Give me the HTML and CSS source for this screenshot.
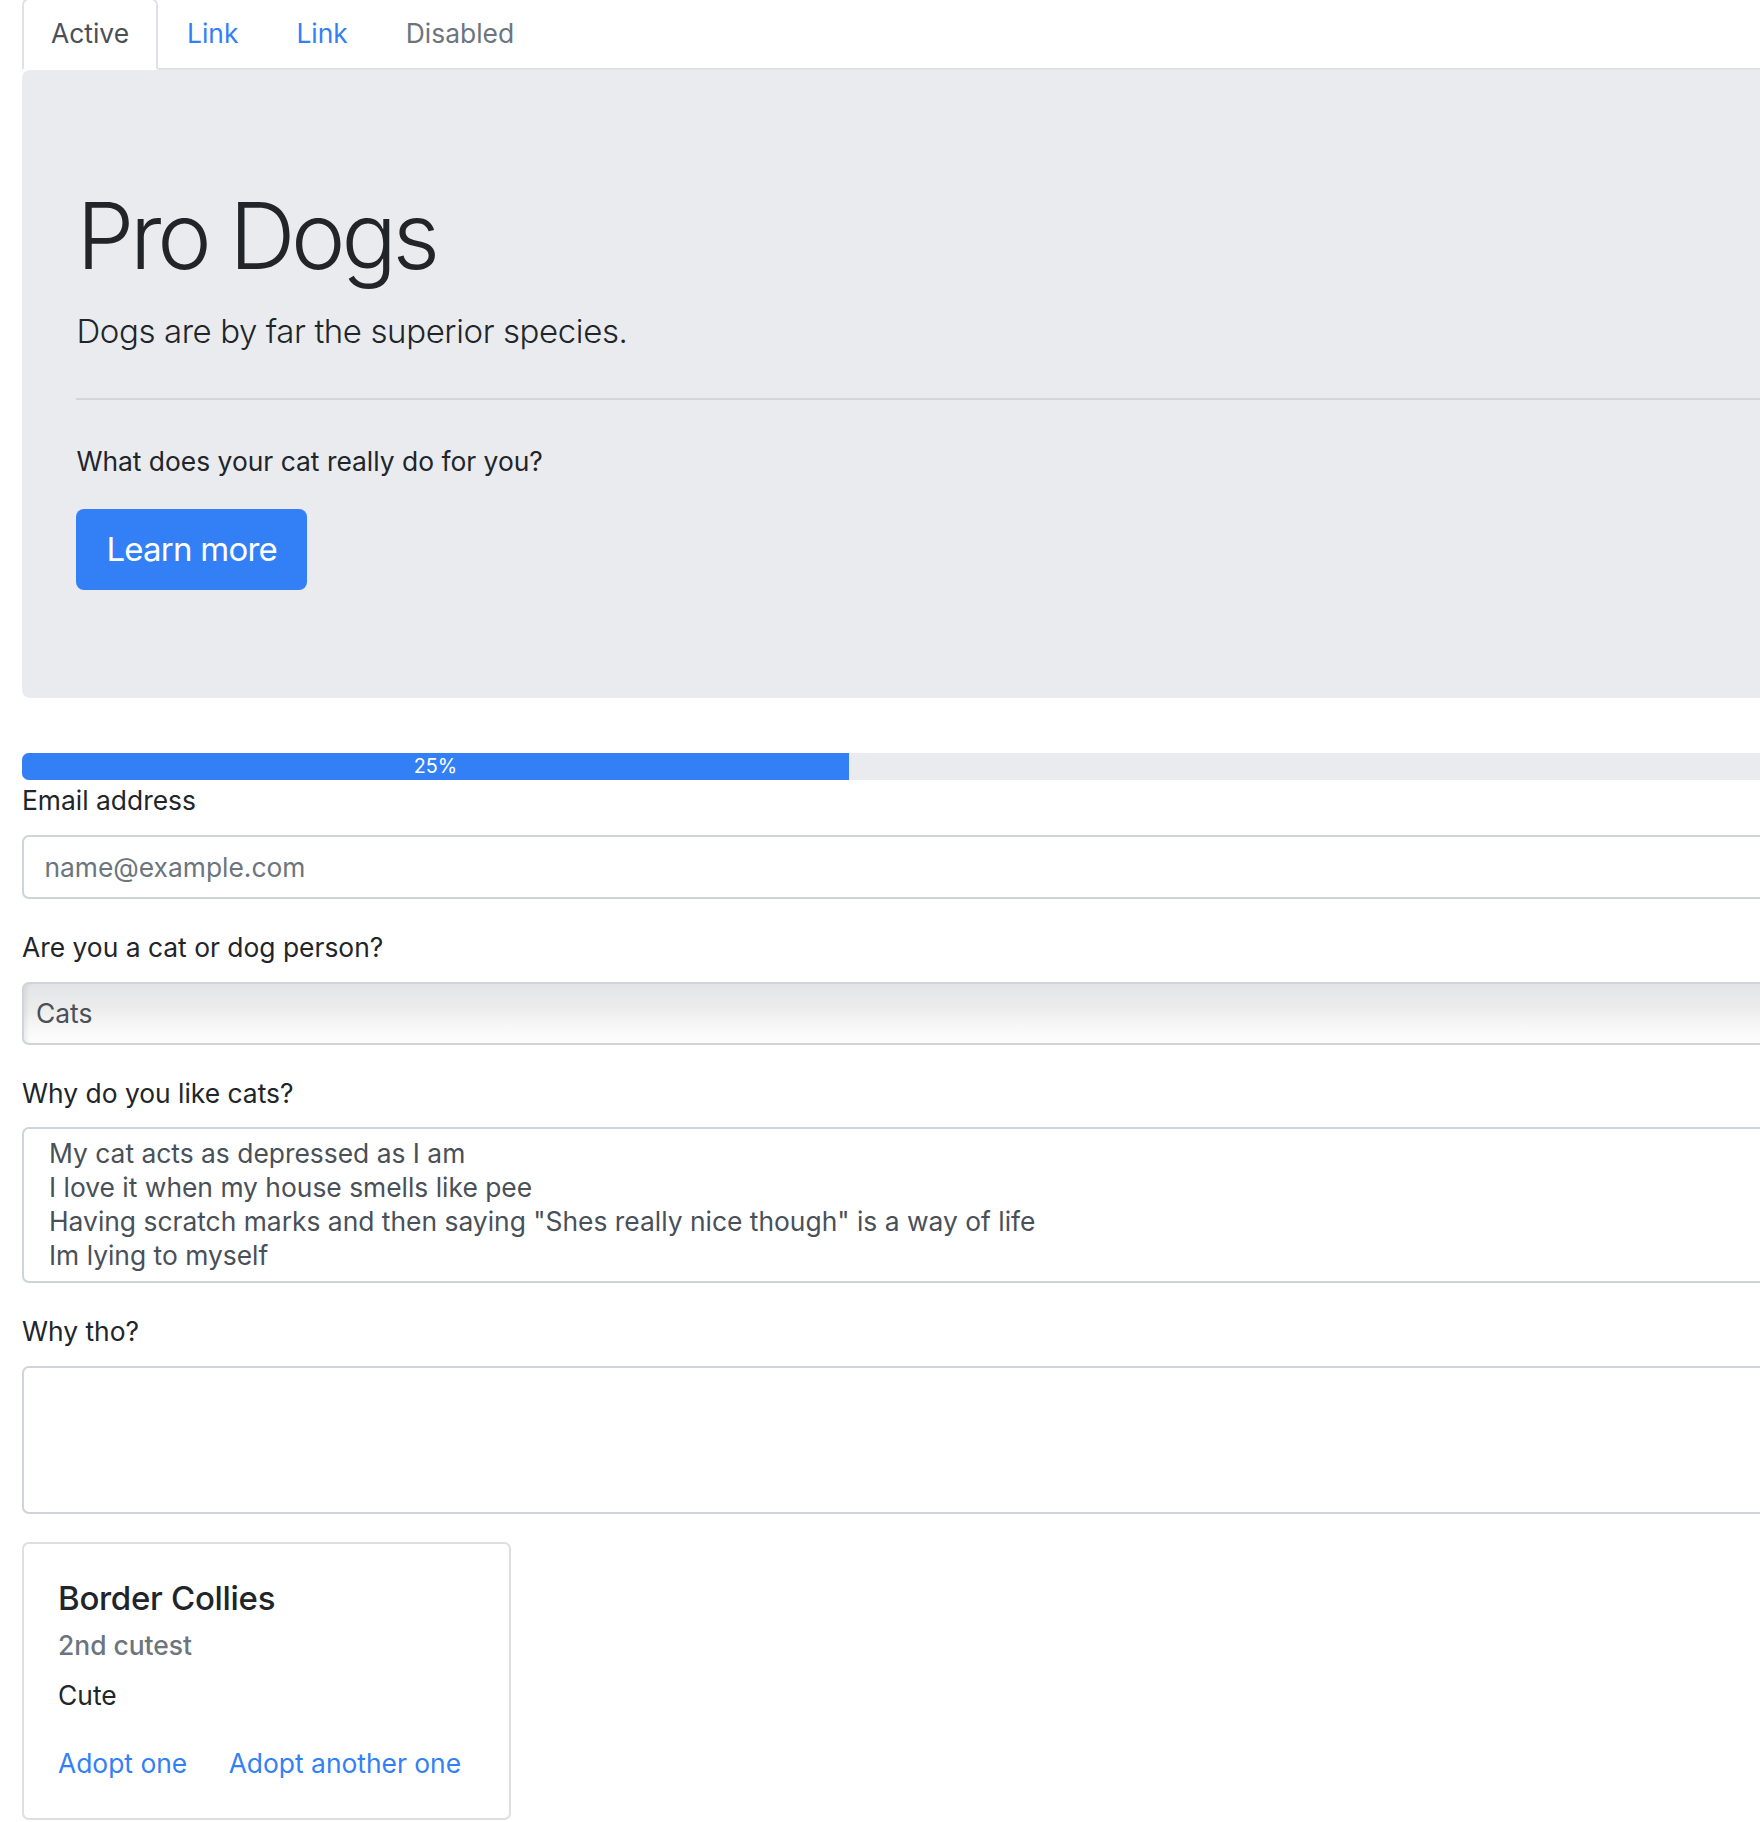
FILE: index.html
```html
<!DOCTYPE html>
<html lang="en">
<head>
<meta charset="utf-8">
<title>Pro Dogs</title>
<link rel="stylesheet" href="styles.css">
</head>
<body>
<div class="page">
  <nav class="tabs">
    <a class="tab tab-active" href="#">Active</a>
    <a class="tab tab-link" href="#">Link</a>
    <a class="tab tab-link" href="#">Link</a>
    <a class="tab tab-disabled">Disabled</a>
  </nav>

  <section class="jumbotron">
    <h1 class="display">Pro Dogs</h1>
    <p class="lead">Dogs are by far the superior species.</p>
    <hr class="divider">
    <p class="text">What does your cat really do for you?</p>
    <a class="btn" href="#">Learn more</a>
  </section>

  <div class="progress">
    <div class="progress-bar" style="width: 25%">25%</div>
  </div>

  <form class="form">
    <div class="form-group">
      <label class="label" for="email">Email address</label>
      <input class="control" id="email" type="email" placeholder="name@example.com">
    </div>
    <div class="form-group">
      <label class="label" for="pet">Are you a cat or dog person?</label>
      <select class="select" id="pet">
        <option>Cats</option>
        <option>Dogs</option>
      </select>
    </div>
    <div class="form-group">
      <label class="label" for="why">Why do you like cats?</label>
      <textarea class="area area-filled" id="why">My cat acts as depressed as I am
I love it when my house smells like pee
Having scratch marks and then saying "Shes really nice though" is a way of life
Im lying to myself</textarea>
    </div>
    <div class="form-group">
      <label class="label" for="tho">Why tho?</label>
      <textarea class="area area-empty" id="tho"></textarea>
    </div>
  </form>

  <div class="card">
    <div class="card-body">
      <h5 class="card-title">Border Collies</h5>
      <h6 class="card-subtitle">2nd cutest</h6>
      <p class="card-text">Cute</p>
      <a class="card-link" href="#">Adopt one</a>
      <a class="card-link card-link-next" href="#">Adopt another one</a>
    </div>
  </div>
</div>
</body>
</html>
```
FILE: styles.css
```css
html, body {
  margin: 0;
  padding: 0;
  overflow-x: hidden;
  background: #ffffff;
}

body {
  font-family: Inter, "Noto Sans", sans-serif;
  font-size: 26.4px;
  line-height: 40.8px;
  color: #212529;
}

*, *::before, *::after {
  box-sizing: border-box;
}

.page {
  width: 3308px;
  margin-left: 22px;
}

/* ---------- tabs ---------- */
.tabs {
  display: flex;
  margin-top: -2px;
  border-bottom: 2px solid #dee2e6;
}

.tab {
  display: block;
  padding: 13px 27px 14px;
  line-height: 40.8px;
  border: 2px solid transparent;
  border-top-left-radius: 7px;
  border-top-right-radius: 7px;
  margin-bottom: -2px;
  text-decoration: none;
}

.tab-active {
  color: #495057;
  background: #ffffff;
  border-color: #dee2e6 #dee2e6 #ffffff;
}

.tab-link {
  color: #3380f6;
}

.tab-disabled {
  color: #6c757d;
}

/* ---------- jumbotron ---------- */
.jumbotron {
  background: #e9ebef;
  border-radius: 8px;
  padding: 108.8px 54.4px;
  margin-bottom: 54.4px;
}

.display {
  margin: 0 0 13.6px;
  font-size: 92px;
  font-weight: 300;
  line-height: 114.2px;
  letter-spacing: -0.046em;
  color: #212529;
}

.lead {
  margin: 0 0 27.2px;
  font-size: 33px;
  font-weight: 300;
  line-height: 51px;
  letter-spacing: -0.012em;
}

.divider {
  margin: 40.8px 0;
  border: 0;
  border-top: 2px solid rgba(0, 0, 0, 0.09);
  height: 0;
}

.text {
  margin: 0 0 27.2px;
}

.btn {
  display: inline-block;
  padding: 14.8px 30px;
  font-size: 33px;
  line-height: 51px;
  letter-spacing: -0.023em;
  color: #ffffff;
  background: #3380f6;
  border-radius: 8px;
  text-decoration: none;
  vertical-align: top;
}

/* ---------- progress ---------- */
.progress {
  display: flex;
  height: 27.2px;
  background: #e9ebef;
  border-radius: 6.8px;
  overflow: hidden;
}

.progress-bar {
  display: flex;
  align-items: center;
  justify-content: center;
  background: #3380f6;
  color: #ffffff;
  font-size: 19.8px;
  line-height: 27.2px;
}

/* ---------- form ---------- */
.form {
  margin: 0;
}

.form-group {
  margin-bottom: 28px;
}

.label {
  display: block;
  margin-bottom: 14px;
  line-height: 40.8px;
}

.control {
  display: block;
  width: 100%;
  height: 64px;
  padding: 0 20.4px;
  font-family: inherit;
  font-size: 26.4px;
  color: #495057;
  background: #ffffff;
  border: 2px solid #ced4da;
  border-radius: 6.8px;
  outline: none;
}

.control::placeholder {
  color: #6c757d;
  opacity: 1;
}

.select {
  display: block;
  width: 100%;
  height: 63px;
  padding: 0 12px;
  font-family: inherit;
  font-size: 26.4px;
  color: #495057;
  border: 2px solid #ced4da;
  border-radius: 6.8px;
  -webkit-appearance: none;
  appearance: none;
  background: linear-gradient(to bottom, #e3e4e5 0%, #ececed 40%, #f8f8f8 75%, #fdfdfd 100%);
  box-shadow: inset 5px 0 5px -3px rgba(0, 0, 0, 0.08);
  outline: none;
}

.area {
  display: block;
  width: 100%;
  padding: 7px 25px 9px;
  font-family: inherit;
  font-size: 26.4px;
  line-height: 34px;
  color: #495057;
  background: #ffffff;
  border: 2px solid #ced4da;
  border-radius: 6.8px;
  resize: none;
  outline: none;
  overflow: hidden;
}

.area-filled {
  height: 156px;
}

.area-empty {
  height: 148px;
}

/* ---------- card ---------- */
.card {
  width: 489px;
  margin-top: 2px;
  border: 2px solid rgba(0, 0, 0, 0.125);
  border-radius: 6.8px;
  background: #ffffff;
}

.card-body {
  padding: 34px;
}

.card-title {
  margin: 0 0 20.4px;
  font-size: 33px;
  font-weight: 500;
  line-height: 40.8px;
  letter-spacing: -0.009em;
  color: #212529;
}

.card-subtitle {
  margin: -10.2px 0 13.6px;
  font-size: 26.4px;
  font-weight: 500;
  line-height: 32.6px;
  color: #6c757d;
}

.card-text {
  margin: 0 0 27.2px;
}

.card-link {
  color: #3380f6;
  text-decoration: none;
}

.card-link-next {
  margin-left: 34px;
}
```
